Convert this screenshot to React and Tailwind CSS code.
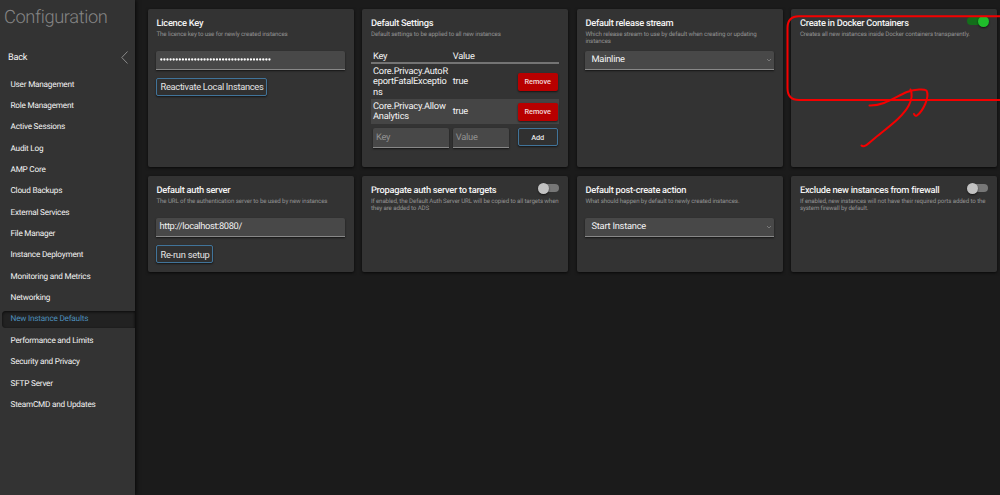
const NAV = [
  'User Management', 'Role Management', 'Active Sessions', 'Audit Log', 'AMP Core',
  'Cloud Backups', 'External Services', 'File Manager', 'Instance Deployment',
  'Monitoring and Metrics', 'Networking', 'New Instance Defaults',
  'Performance and Limits', 'Security and Privacy', 'SFTP Server', 'SteamCMD and Updates',
];

const FIELD = 'rounded-t-[2px] border-b border-[#888] bg-[#484848] shadow-[0_1px_2px_rgba(0,0,0,0.6)]';
const OUTLINE = 'rounded-[2px] border border-[#41749a] bg-[#303030] text-[#e4e4e4] shadow-[0_1px_2px_rgba(0,0,0,0.6)]';

function Sidebar() {
  return (
    <aside className="z-10 flex w-[135px] shrink-0 flex-col bg-[#333] shadow-[1px_0_4px_rgba(0,0,0,0.7)]">
      <h1 className="mt-[6px] h-[24px] pl-[4px] text-[18.3px] leading-[24px] font-light tracking-[-0.38px] text-[#858585]">Configuration</h1>
      <div className="mt-[17px] flex h-[20px] items-center justify-between pr-[7px] pl-[8px] text-[9.2px] tracking-[-0.25px] text-[#f2f2f2]">
        <span className="mt-[2px]">Back</span>
        <svg className="h-[13px] w-[7px]" viewBox="0 0 7 13" fill="none" stroke="#8a8a8a" strokeWidth="1">
          <path d="M6.5 .5 L.8 6.5 L6.5 12.5" />
        </svg>
      </div>
      <nav className="mt-[7px] flex flex-col pl-[2px]">
        {NAV.map((name) => (
          <div key={name} className="flex h-[21.37px] items-center">
            <div
              className={
                name === 'New Instance Defaults'
                  ? 'flex h-[17px] w-full items-center rounded-l-[4px] bg-[#222] pl-[8.5px] text-[8.2px] tracking-[-0.21px] text-[#4d8fbd] shadow-[inset_0_1px_3px_rgba(0,0,0,0.7)]'
                  : 'flex h-[17px] w-full items-center pl-[8.5px] text-[8.2px] tracking-[-0.21px] text-[#f4f4f4]'
              }
            >
              {name}
            </div>
          </div>
        ))}
      </nav>
    </aside>
  );
}

function Toggle({ on }) {
  return on ? (
    <div className="mt-[6px] -mr-[1px] flex h-[12px] w-[22px] shrink-0 items-center">
      <div className="h-[8px] w-[16px] shrink-0 rounded-full bg-[#136e1a]" />
      <div className="-ml-[5px] h-[11px] w-[11px] shrink-0 rounded-full bg-[#1fbd2b] shadow-[0_1px_2px_rgba(0,0,0,0.6)]" />
    </div>
  ) : (
    <div className="mt-[6px] -mr-[1px] flex h-[12px] w-[22px] shrink-0 items-center">
      <div className="z-10 h-[11px] w-[11px] shrink-0 rounded-full bg-[#c2c2c2] shadow-[0_1px_2px_rgba(0,0,0,0.6)]" />
      <div className="-ml-[6px] h-[8px] w-[16px] shrink-0 rounded-full bg-[#777]" />
    </div>
  );
}

function Card({ title, note, toggle, on, children }) {
  return (
    <section className="flex min-w-0 flex-col rounded-[2px] bg-[#333] px-[8.6px] shadow-[0_1px_3px_rgba(0,0,0,0.7)]">
      <div className="flex h-[20px] justify-between">
        <h2 className="mt-[9px] h-[12px] text-[9.3px] leading-[12px] font-medium tracking-[-0.28px] whitespace-nowrap text-[#f2f2f2]">{title}</h2>
        {toggle && <Toggle on={on} />}
      </div>
      <p className="mt-[2px] h-[19.5px] text-[6.2px] leading-[7.2px] tracking-[-0.13px] whitespace-pre text-[#929292]">{note}</p>
      {children}
    </section>
  );
}

function Select({ value }) {
  return (
    <div className={`flex h-[19px] items-center justify-between pr-[2px] pl-[6px] text-[9.3px] tracking-[-0.23px] text-[#f4f4f4] ${FIELD}`}>
      <span className="mt-[1px]">{value}</span>
      <svg className="h-[4px] w-[6px]" viewBox="0 0 6 4" fill="none" stroke="#858585" strokeWidth=".8">
        <path d="M1 1 L3 3 L5 1" />
      </svg>
    </div>
  );
}

function RemoveButton() {
  return (
    <button className="h-[18px] w-[40px] rounded-[2px] bg-[#b80000] pt-[1px] text-[7.4px] font-medium tracking-[-0.05px] text-[#f0dada] shadow-[0_1px_2px_rgba(0,0,0,0.6)]">
      Remove
    </button>
  );
}

const COLS = 'grid grid-cols-[79.7px_65px_40px] items-center pl-[2px]';

function SettingsTable() {
  return (
    <div className="text-[9.3px] tracking-[-0.22px] text-[#f4f4f4]">
      <div className={`h-[13.5px] border-b-2 border-[#747474] ${COLS}`}>
        <span className="mt-[-1px]">Key</span>
        <span className="mt-[-1px]">Value</span>
      </div>
      <div className={`h-[35px] leading-[10.5px] ${COLS}`}>
        <span className="mt-[2px]">Core.Privacy.AutoR<br />eportFatalExceptio<br />ns</span>
        <span className="mt-[2px]">true</span>
        <RemoveButton />
      </div>
      <div className={`h-[25px] bg-[#454545] leading-[10.3px] ${COLS}`}>
        <span className="mt-[1px]">Core.Privacy.Allow<br />Analytics</span>
        <span className="mt-[2px]">true</span>
        <RemoveButton />
      </div>
      <div className={`mt-[4px] h-[20px] ${COLS}`}>
        <div className={`flex h-[20px] w-[76px] items-center pt-[1px] pl-[3px] text-[#929292] ${FIELD}`}>Key</div>
        <div className={`flex h-[20px] w-[56px] items-center pt-[1px] pl-[3px] text-[#929292] ${FIELD}`}>Value</div>
        <button className={`h-[18px] w-[40px] self-start pt-[1px] text-[7.4px] font-medium ${OUTLINE}`}>Add</button>
      </div>
    </div>
  );
}

function Annotation() {
  return (
    <svg className="pointer-events-none absolute inset-0 z-20 h-[495px] w-[1000px]" viewBox="0 0 1000 495" fill="none" stroke="#f50000" strokeWidth="2" strokeLinecap="round" strokeLinejoin="round">
      <path d="M1002 16.3 H799 Q787.5 16.3 787.5 28 V88 Q787.5 100 799 100 H1002" />
      <path d="M861.5 145.5 C864 148 868 144 875 138 C887 128 903 117 909 105 C912 99 912 93 910.5 89.5" />
      <path d="M869.5 105.5 C884 106 895 97 907 92 C916 89 924 89 926.5 90.5 C930 97 923 111 917 115.5 C915.5 116.5 914.5 115 914 114" />
    </svg>
  );
}

export default function App() {
  return (
    <div className="relative flex h-[495px] w-[1000px] overflow-hidden bg-[#1b1b1b] font-['Roboto',sans-serif] [text-rendering:geometricPrecision]">
      <Sidebar />
      <main className="grid flex-1 grid-cols-[repeat(4,205.7px)] grid-rows-[158px_95.5px] content-start gap-x-[8.8px] gap-y-[9px] pt-[9px] pl-[12.9px]">
        <Card title="Licence Key" note="The licence key to use for newly created instances">
          <div className={`flex h-[19px] items-center pl-[3.6px] ${FIELD}`}>
            <svg className="h-[3px] w-[112px]" viewBox="0 0 112 3" fill="#fff">
              {Array.from({ length: 36 }, (_, i) => (
                <circle key={i} cx={1.3 + i * 3.09} cy="1.5" r="1.15" />
              ))}
            </svg>
          </div>
          <button className={`mt-[8px] h-[18px] w-[111px] pt-[1px] text-[9.3px] tracking-[-0.3px] whitespace-nowrap ${OUTLINE}`}>Reactivate Local Instances</button>
        </Card>
        <Card title="Default Settings" note="Default settings to be applied to all new instances">
          <SettingsTable />
        </Card>
        <Card title="Default release stream" note={'Which release stream to use by default when creating or updating\ninstances'}>
          <Select value="Mainline" />
        </Card>
        <Card title="Create in Docker Containers" note="Creates all new instances inside Docker containers transparently." toggle on />
        <Card title="Default auth server" note="The URL of the authentication server to be used by new instances">
          <div className={`flex h-[19.5px] items-center pt-[1px] pl-[3px] text-[9.3px] tracking-[-0.36px] text-[#f0f0f0] ${FIELD}`}>http://localhost:8080/</div>
          <button className={`mt-[8px] h-[18px] w-[57px] pt-[1px] text-[9.3px] tracking-[-0.24px] whitespace-nowrap ${OUTLINE}`}>Re-run setup</button>
        </Card>
        <Card title="Propagate auth server to targets" note={'If enabled, the Default Auth Server URL will be copied to all targets when\nthey are added to ADS'} toggle />
        <Card title="Default post-create action" note="What should happen by default to newly created instances.">
          <Select value="Start Instance" />
        </Card>
        <Card title="Exclude new instances from firewall" note={'If enabled, new instances will not have their required ports added to the\nsystem firewall by default.'} toggle />
      </main>
      <Annotation />
    </div>
  );
}
